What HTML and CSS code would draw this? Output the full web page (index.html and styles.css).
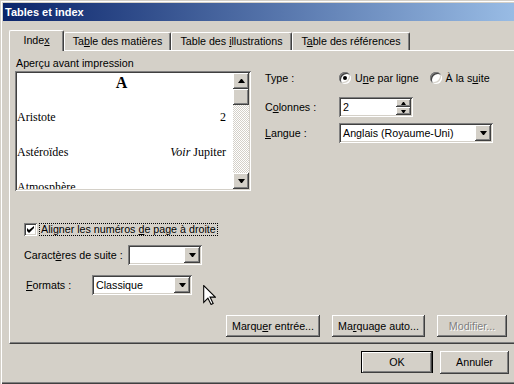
FILE: index.html
```html
<!DOCTYPE html>
<html lang="fr">

<head>
    <meta charset="UTF-8">
    <meta name="viewport" content="width=device-width, initial-scale=1.0">
    <title>Tables et index</title>
    <link rel="stylesheet" href="styles.css">
</head>

<body>
    <div class="window">
        <div class="titlebar">Tables et index</div>
        <div class="content">
            <div class="tabs">
                <div class="tab active tab-index">Inde<u>x</u></div>
                <div class="tab tab-tdm">Ta<u>b</u>le des matières</div>
                <div class="tab tab-ill">Table des <u>i</u>llustrations</div>
                <div class="tab tab-ref">T<u>a</u>ble des références</div>
            </div>
            <div class="panel">
                <div class="top">
                    <div class="preview-col">
                        <div class="preview-label">Aperçu avant impression</div>
                        <div class="preview">
                            <div class="page">
                                <div class="letter">A</div>
                                <div class="entry"><span>Aristote</span><span>2</span></div>
                                <div class="entry"><span>Astéroïdes</span><span><i>Voir</i> Jupiter</span></div>
                                <div class="entry"><span>Atmosphère</span></div>
                            </div>
                            <div class="vscroll">
                                <div class="btn3d sbtn"><svg width="7" height="4"><path d="M3 0h1l3 4H0z" /></svg></div>
                                <div class="btn3d thumb"></div>
                                <div class="track"></div>
                                <div class="btn3d sbtn"><svg width="7" height="4"><path d="M0 0h7L4 4H3z" /></svg></div>
                            </div>
                        </div>
                    </div>
                    <div class="options">
                        <div class="row type-row">
                            <span class="lbl">Type :</span>
                            <span class="radio checked"></span><span class="radio-text">U<u>n</u>e par ligne</span>
                            <span class="radio second"></span><span class="radio-text">À la s<u>u</u>ite</span>
                        </div>
                        <div class="row field-row">
                            <span class="lbl">C<u>o</u>lonnes :</span>
                            <div class="sunken spin">
                                <span class="value">2</span>
                                <div class="spin-btns">
                                    <div class="btn3d"><svg width="5" height="3"><path d="M2 0h1l2 3H0z" /></svg></div>
                                    <div class="btn3d"><svg width="5" height="3"><path d="M0 0h5L3 3H2z" /></svg></div>
                                </div>
                            </div>
                        </div>
                        <div class="row">
                            <span class="lbl"><u>L</u>angue :</span>
                            <div class="sunken combo combo-langue">
                                <span class="value">Anglais (Royaume-Uni)</span>
                                <div class="btn3d dd"><svg width="7" height="4"><path d="M0 0h7L4 4H3z" /></svg></div>
                            </div>
                        </div>
                    </div>
                </div>

                <div class="check-row">
                    <span class="sunken checkbox"><svg width="7" height="7"><path d="M0 2l2 2 5-4v2l-5 5-2-2z" /></svg></span>
                    <span class="focus">Aligner les numéros <u>d</u>e page à droite</span>
                </div>

                <div class="line suite-row">
                    <span class="suite-lbl">Caract<u>è</u>res de suite :</span>
                    <div class="sunken combo combo-suite">
                        <span class="value"></span>
                        <div class="btn3d dd"><svg width="7" height="4"><path d="M0 0h7L4 4H3z" /></svg></div>
                    </div>
                </div>

                <div class="line formats-row">
                    <span class="formats-lbl"><u>F</u>ormats :</span>
                    <div class="sunken combo combo-formats">
                        <span class="value">Classique</span>
                        <div class="btn3d dd"><svg width="7" height="4"><path d="M0 0h7L4 4H3z" /></svg></div>
                    </div>
                </div>

                <div class="panel-buttons">
                    <div class="btn3d button b-marquer">Marqu<u>e</u>r entrée...</div>
                    <div class="btn3d button b-auto">Ma<u>r</u>quage auto...</div>
                    <div class="btn3d button b-modif disabled">Modifier...</div>
                </div>
            </div>

            <div class="footer">
                <div class="button default"><div class="btn3d inner">OK</div></div>
                <div class="btn3d button b-annuler">Annuler</div>
            </div>
        </div>

        <svg class="cursor" width="13" height="20" viewBox="0 0 12 19">
            <path d="M0.5 0.5V16.5L4.5 12.5L7.5 18.5L9.5 17.5L6.5 11.5H11.5Z" fill="#fff" stroke="#000" />
        </svg>
    </div>
</body>

</html>
```

FILE: styles.css
```css
body {
    margin: 0;
    font-family: "Liberation Sans", Arial, sans-serif;
    font-size: 10.7px;
    color: #000;
}

u {
    text-underline-offset: 1px;
}

.window {
    position: relative;
    width: 514px;
    height: 384px;
    box-sizing: border-box;
    padding: 3px 0 0 3px;
    background: #d4d0c8;
    overflow: hidden;
    box-shadow: inset 1px 1px #d4d0c8, inset 2px 2px #fff, inset 0 -1px #404040, inset 0 -2px #808080;
}

.titlebar {
    height: 18px;
    line-height: 18px;
    padding-left: 2px;
    color: #fff;
    font-weight: bold;
    font-size: 11px;
    background: linear-gradient(to right, #0a246a 0, #a6caf0 560px);
}

.content {
    padding: 9px 0 0 6px;
}

/* 3d helpers */
.btn3d {
    background: #d4d0c8;
    box-shadow: inset -1px -1px #404040, inset 1px 1px #fff, inset -2px -2px #808080, inset 2px 2px #d4d0c8;
}

.sunken {
    background: #fff;
    box-shadow: inset 1px 1px #808080, inset -1px -1px #fff, inset 2px 2px #404040, inset -2px -2px #d4d0c8;
}

/* tabs */
.tabs {
    display: flex;
    align-items: flex-end;
    height: 20px;
    position: relative;
    z-index: 1;
}

.tab {
    height: 18px;
    box-sizing: border-box;
    line-height: 17px;
    text-align: center;
    background: #d4d0c8;
    border-top: 1px solid #fff;
    border-left: 1px solid #fff;
    border-right: 1px solid #404040;
    border-radius: 2px 2px 0 0;
    box-shadow: inset -1px 0 #808080;
}

.tab.active {
    height: 21px;
    line-height: 19px;
    margin-bottom: -1px;
}

.tab-index { width: 55px; }
.tab-tdm { width: 107px; }
.tab-ill { width: 121px; }
.tab-ref { width: 118px; }

/* panel */
.panel {
    height: 292px;
    margin-right: -10px;
    border-top: 1px solid #fff;
    border-left: 1px solid #fff;
    border-bottom: 1px solid #404040;
    box-shadow: inset 0 -1px #808080;
}

.top {
    display: flex;
    padding: 5px 0 0 5px;
}

.preview-label {
    line-height: 14px;
    margin-bottom: 1px;
    padding-left: 1px;
}

.preview {
    display: flex;
    width: 236px;
    height: 120px;
    box-sizing: border-box;
    padding: 2px;
    box-shadow: inset 1px 1px #808080, inset -1px -1px #fff, inset 2px 2px #404040, inset -2px -2px #d4d0c8;
}

.page {
    flex: 1;
    background: #fff;
    overflow: hidden;
    padding: 0 7px 0 0;
    font-family: "Liberation Serif", "Times New Roman", serif;
    font-size: 12px;
}

.letter {
    height: 27px;
    line-height: 20px;
    text-align: center;
    font-weight: bold;
    font-size: 16px;
}

.entry {
    display: flex;
    justify-content: space-between;
    height: 35px;
    line-height: 35px;
}

.vscroll {
    width: 16px;
    display: flex;
    flex-direction: column;
}

.sbtn,
.thumb {
    height: 16px;
}

.sbtn,
.dd,
.spin-btns .btn3d {
    display: flex;
    align-items: center;
    justify-content: center;
}

.track {
    flex: 1;
    background: repeating-conic-gradient(#fff 0 25%, #d4d0c8 0 50%) 0 0 / 2px 2px;
}

/* options on the right */
.options {
    margin-left: 14px;
    padding-top: 15px;
}

.row {
    display: flex;
    align-items: center;
    height: 20px;
}

.type-row {
    height: 14px;
    margin-bottom: 12px;
}

.field-row {
    margin-bottom: 6px;
}

.lbl {
    width: 74px;
}

.radio {
    position: relative;
    width: 12px;
    height: 12px;
    border-radius: 50%;
    background: #fff;
    box-shadow: inset 1px 1px #808080, inset -1px -1px #fff, inset 2px 2px #404040, inset -2px -2px #d4d0c8;
}

.radio.checked:after {
    content: '';
    position: absolute;
    left: 4px;
    top: 4px;
    width: 4px;
    height: 4px;
    border-radius: 50%;
    background: #000;
}

.radio.second {
    margin-left: 11px;
}

.radio-text {
    margin-left: 4px;
}

.spin,
.combo {
    display: flex;
    height: 20px;
    box-sizing: border-box;
    padding: 2px;
}

.value {
    flex: 1;
    padding-left: 2px;
    line-height: 16px;
}

.spin {
    width: 74px;
}

.spin-btns {
    width: 15px;
    display: flex;
    flex-direction: column;
}

.spin-btns .btn3d {
    height: 8px;
}

.dd {
    width: 16px;
    height: 16px;
}

.combo-langue { width: 154px; }
.combo-suite { width: 74px; }
.combo-formats { width: 100px; }

/* lower part */
.check-row {
    display: flex;
    align-items: center;
    height: 15px;
    margin: 31px 0 0 14px;
}

.checkbox {
    width: 13px;
    height: 13px;
    display: flex;
    align-items: center;
    justify-content: center;
}

.focus {
    margin-left: 2px;
    padding: 0 1px;
    line-height: 11px;
    border: 1px dotted #000;
}

.line {
    display: flex;
    align-items: center;
    height: 20px;
}

.suite-row {
    margin: 8px 0 0 14px;
}

.suite-lbl {
    width: 104px;
}

.formats-row {
    margin: 10px 0 0 16px;
}

.formats-lbl {
    width: 66px;
}

.panel-buttons {
    display: flex;
    gap: 12px;
    margin: 20px 0 0 216px;
}

.button {
    height: 22px;
    line-height: 22px;
    text-align: center;
    box-sizing: border-box;
}

.b-marquer { width: 94px; }
.b-auto { width: 93px; }
.b-modif { width: 70px; }

.disabled {
    color: #808080;
    text-shadow: 1px 1px #fff;
}

.footer {
    display: flex;
    justify-content: flex-end;
    gap: 7px;
    margin-top: 7px;
    padding-right: 5px;
}

.default {
    width: 72px;
    border: 1px solid #000;
}

.default .inner {
    height: 21px;
    line-height: 21px;
}

.b-annuler {
    width: 69px;
    height: 23px;
    line-height: 23px;
}

.cursor {
    position: absolute;
    left: 203px;
    top: 285px;
}
```
